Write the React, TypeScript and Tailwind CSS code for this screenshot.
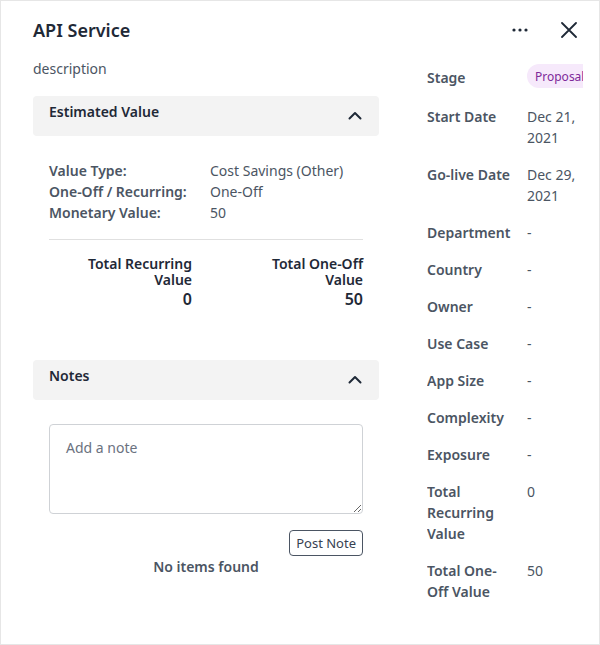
import React from "react"

const font = { fontFamily: '"Noto Sans", "Open Sans", sans-serif' }

function ChevronUp() {
  return (
    <svg width="16" height="16" viewBox="0 0 16 16" fill="none" className="shrink-0">
      <path d="M2.5 10.5 L8 5 L13.5 10.5" stroke="#1f2937" strokeWidth="2" strokeLinecap="round" strokeLinejoin="round" />
    </svg>
  )
}

const details: { label: string; value: React.ReactNode }[] = [
  { label: "Start Date", value: "Dec 21, 2021" },
  { label: "Go-live Date", value: "Dec 29, 2021" },
  { label: "Department", value: "-" },
  { label: "Country", value: "-" },
  { label: "Owner", value: "-" },
  { label: "Use Case", value: "-" },
  { label: "App Size", value: "-" },
  { label: "Complexity", value: "-" },
  { label: "Exposure", value: "-" },
  { label: "Total Recurring Value", value: "0" },
  { label: "Total One-Off Value", value: "50" },
]

export default function App() {
  return (
    <div
      style={font}
      className="w-[600px] h-[645px] border border-[#e6e6e6] bg-white pl-8 pr-4 pt-[15px] overflow-hidden"
    >
      <div className="flex items-center justify-between h-7">
        <h1 className="text-[18px] font-semibold leading-7 text-[#1f2937]">API Service</h1>
        <div className="flex items-center gap-[33px] pr-[6px]">
          <svg width="16" height="4" viewBox="0 0 16 4" fill="#1f2937">
            <circle cx="2" cy="2" r="1.6" />
            <circle cx="8" cy="2" r="1.6" />
            <circle cx="14" cy="2" r="1.6" />
          </svg>
          <svg width="16" height="16" viewBox="0 0 16 16" fill="none">
            <path d="M1 1 L15 15 M15 1 L1 15" stroke="#1f2937" strokeWidth="1.8" strokeLinecap="round" />
          </svg>
        </div>
      </div>

      <div className="flex mt-[15px]">
        {/* left column */}
        <div className="w-[346px] shrink-0">
          <p className="text-sm leading-5 text-[#4b5563]">description</p>

          <div className="mt-[17px] h-10 rounded bg-[#f3f3f3] pl-4 pr-4 pt-[6px] flex items-start justify-between">
            <span className="text-sm font-semibold leading-5 text-[#1f2937]">Estimated Value</span>
            <span className="mt-[6px]"><ChevronUp /></span>
          </div>

          <div className="px-4 pt-6">
            <div className="grid grid-cols-[161px_1fr] text-sm leading-[21px]">
              <span className="font-semibold text-[#4b5563]">Value Type:</span>
              <span className="text-[#4b5563]">Cost Savings (Other)</span>
              <span className="font-semibold text-[#4b5563]">One-Off / Recurring:</span>
              <span className="text-[#4b5563]">One-Off</span>
              <span className="font-semibold text-[#4b5563]">Monetary Value:</span>
              <span className="text-[#4b5563]">50</span>
            </div>
            <div className="mt-4 border-t border-[#e0e0e0]" />
            <div className="grid grid-cols-2 gap-7 mt-[16px] text-right text-[#1f2937]">
              <div>
                <div className="text-sm font-semibold leading-4">Total Recurring<br />Value</div>
                <div className="text-base font-semibold leading-[22px]">0</div>
              </div>
              <div>
                <div className="text-sm font-semibold leading-4">Total One-Off<br />Value</div>
                <div className="text-base font-semibold leading-[22px]">50</div>
              </div>
            </div>
          </div>

          <div className="mt-[50px] h-10 rounded bg-[#f3f3f3] pl-4 pr-4 pt-[6px] flex items-start justify-between">
            <span className="text-sm font-semibold leading-5 text-[#1f2937]">Notes</span>
            <span className="mt-[6px]"><ChevronUp /></span>
          </div>

          <div className="px-4 pt-6">
            <textarea
              placeholder="Add a note"
              style={font}
              className="block w-full h-[90px] rounded border border-[#cfd2d6] px-4 pt-[13px] pb-3 text-sm leading-5 text-[#1f2937] placeholder:text-[#6b7280] outline-none"
            />
            <div className="flex justify-end mt-4">
              <button
                style={font}
                className="h-[26px] px-[6px] rounded border border-[#4b5563] text-[13px] leading-none text-[#374151] bg-white"
              >
                Post Note
              </button>
            </div>
            <p className="text-center text-sm font-semibold leading-5 text-[#4b5563] mt-px">No items found</p>
          </div>
        </div>

        {/* right column */}
        <div className="ml-12 w-[156px] overflow-hidden pt-[5px]">
          <div className="grid grid-cols-[88px_1fr] gap-x-3 gap-y-4 text-sm leading-[21px]">
            <span className="font-semibold text-[#4b5563] self-center">Stage</span>
            <span className="inline-flex h-6 mb-[2px] items-center rounded-full bg-[#f6e9fb] pl-2 pr-3 text-[12px] text-[#7e2a9a] whitespace-nowrap w-max">
              Proposal
            </span>
            {details.map((d) => (
              <React.Fragment key={d.label}>
                <span className="font-semibold text-[#4b5563]">{d.label}</span>
                <span className="text-[#4b5563]">{d.value}</span>
              </React.Fragment>
            ))}
          </div>
        </div>
      </div>
    </div>
  )
}
